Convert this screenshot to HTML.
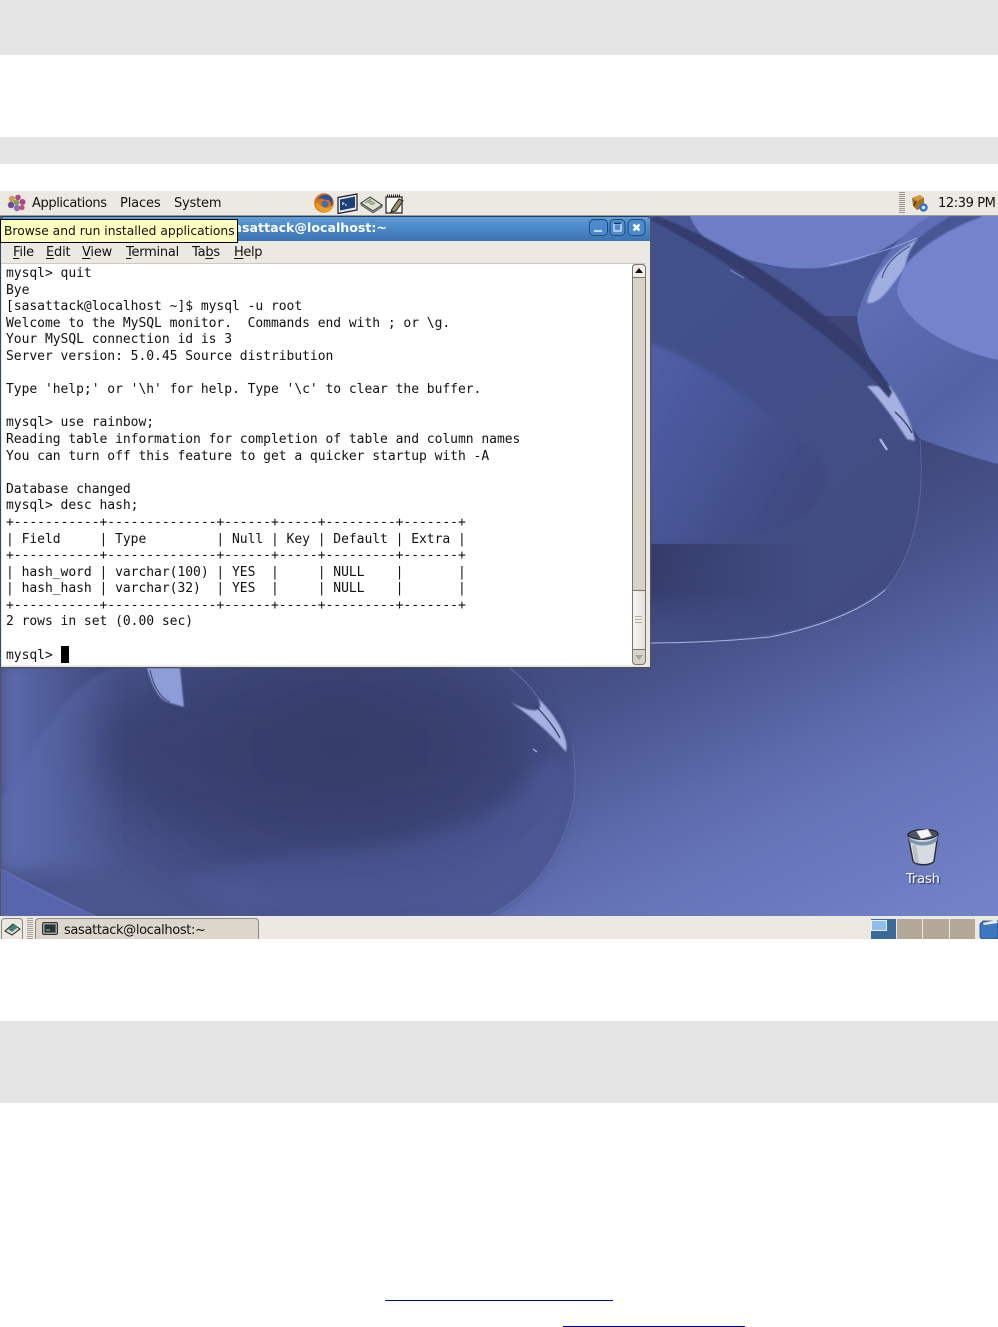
<!DOCTYPE html>
<html><head><meta charset="utf-8"><style>
html,body{margin:0;padding:0;background:#fff;width:998px;height:1327px;overflow:hidden}
body{position:relative;font-family:"DejaVu Sans","Liberation Sans",sans-serif;color:#111}
.a{position:absolute}
.band{position:absolute;left:0;width:998px;background:#e5e5e5}
.m{position:absolute;font-size:13px;line-height:16px;white-space:pre}
u{text-decoration-thickness:1px;text-underline-offset:2px}
#term{position:absolute;left:6px;top:266px;margin:0;font:13px/16.6px "DejaVu Sans Mono","Liberation Mono",monospace;letter-spacing:-.034px;color:#111;white-space:pre}
</style></head><body>
<div class="band" style="top:0;height:55px"></div>
<div class="band" style="top:137px;height:27px"></div>
<div class="band" style="top:1021px;height:82px"></div>

<svg class="a" style="left:0;top:216px" width="998" height="700" viewBox="0 216 998 700">
<defs>
<filter id="b2" x="-20%" y="-20%" width="140%" height="140%"><feGaussianBlur stdDeviation="2"/></filter>
<filter id="b6" x="-30%" y="-30%" width="160%" height="160%"><feGaussianBlur stdDeviation="8"/></filter>
<filter id="b20" x="-30%" y="-30%" width="160%" height="160%"><feGaussianBlur stdDeviation="22"/></filter>
<filter id="b1" x="-20%" y="-20%" width="140%" height="140%"><feGaussianBlur stdDeviation=".8"/></filter>
<linearGradient id="base" gradientUnits="userSpaceOnUse" x1="750" y1="500" x2="950" y2="915"><stop offset="0" stop-color="#3d4676"/><stop offset=".25" stop-color="#47528a"/><stop offset=".55" stop-color="#5e6cae"/><stop offset=".65" stop-color="#6472b6"/><stop offset="1" stop-color="#7282c8"/></linearGradient>
<radialGradient id="low" gradientUnits="userSpaceOnUse" cx="340" cy="750" r="300" gradientTransform="translate(0 220) scale(1 .7)"><stop offset="0" stop-color="#363d69"/><stop offset=".6" stop-color="#414a7e"/><stop offset="1" stop-color="#4b568f"/></radialGradient>
<linearGradient id="bowl" gradientUnits="userSpaceOnUse" x1="650" y1="300" x2="900" y2="620"><stop offset="0" stop-color="#42508c"/><stop offset="1" stop-color="#424c80"/></linearGradient>
<linearGradient id="inner" gradientUnits="userSpaceOnUse" x1="650" y1="380" x2="860" y2="500"><stop offset="0" stop-color="#4f5ea6"/><stop offset=".55" stop-color="#434f8c"/><stop offset="1" stop-color="#3c4577"/></linearGradient>
<linearGradient id="rb" gradientUnits="userSpaceOnUse" x1="860" y1="300" x2="998" y2="470"><stop offset="0" stop-color="#5e6fb6"/><stop offset=".6" stop-color="#5362a4"/><stop offset="1" stop-color="#6070b4"/></linearGradient>
<linearGradient id="lb" gradientUnits="userSpaceOnUse" x1="0" y1="0" x2="120" y2="0"><stop offset="0" stop-color="#5e6cb2"/><stop offset="1" stop-color="#5e6cb2" stop-opacity="0"/></linearGradient>
<linearGradient id="dkv" gradientUnits="userSpaceOnUse" x1="0" y1="544" x2="0" y2="640"><stop offset="0" stop-color="#343c68"/><stop offset=".5" stop-color="#363e6c"/><stop offset="1" stop-color="#3f4a80" stop-opacity="0"/></linearGradient>
<linearGradient id="mk" gradientUnits="userSpaceOnUse" x1="650" y1="0" x2="810" y2="0"><stop offset="0" stop-color="#fff"/><stop offset="1" stop-color="#000"/></linearGradient>
<mask id="fade" maskUnits="userSpaceOnUse" x="640" y="530" width="200" height="120"><rect x="640" y="530" width="200" height="120" fill="url(#mk)"/></mask>
</defs>
<rect x="0" y="216" width="998" height="700" fill="url(#base)"/>
<rect x="640" y="216" width="358" height="100" fill="#4a5796"/>
<path d="M690 216C700 245 740 262 790 268 850 272 890 250 930 216Z" fill="#6d7dc6"/>
<path d="M930 216C900 232 870 270 857 316 860 350 880 380 920 439 950 450 975 458 998 464V216Z" fill="url(#rb)"/>
<path d="M983 216C940 225 905 250 897 290 900 320 950 350 998 360V216Z" fill="#7383cc"/>
<path d="M950 216H983C945 230 915 250 900 272 895 262 900 250 917 240 925 232 938 224 950 216Z" fill="#4a5794" filter="url(#b1)"/>
<path d="M650 216C720 240 800 300 870 360 905 400 920 440 920 470 920 540 900 580 880 592 840 620 790 640 650 643Z" fill="url(#bowl)"/>
<path d="M650 343C700 360 770 410 817 456 835 480 820 510 780 528 740 540 700 544 650 544Z" fill="url(#inner)" filter="url(#b2)"/>
<rect x="640" y="544" width="180" height="96" fill="url(#dkv)" mask="url(#fade)"/>
<path d="M867 386C880 400 895 420 907 439L915 441C912 425 905 408 890 386Z" fill="#a5b1e2" filter="url(#b1)"/>
<path d="M657 216C700 232 770 270 817 310 850 335 875 360 892 392L889 398C880 388 875 382 867 373 840 345 790 310 772 296 730 265 690 240 650 220Z" fill="#343e6e" filter="url(#b1)"/>
<path d="M895 412C902 418 908 425 912 433" stroke="#343c62" stroke-width="1.3" fill="none"/>
<path d="M880 439L887 450" stroke="#a5b1e2" stroke-width="2.5"/>
<path d="M917 240C895 250 872 275 867 303 880 305 892 285 903 270 908 262 905 255 917 240Z" fill="#a0aee0" filter="url(#b1)"/>
<path d="M910 246C895 255 885 265 882 278" stroke="#3a4470" stroke-width="1" fill="none"/>
<path d="M830 265C860 258 890 250 917 238" stroke="#a9b6e8" stroke-width="1" fill="none" opacity=".7"/>
<path d="M920 440C925 500 915 555 885 590" stroke="#8a96cc" stroke-width="1" fill="none" opacity=".35"/>
<path d="M885 590C860 612 815 628 770 637 720 642 680 643 650 643" stroke="#b5bee8" stroke-width="1" fill="none" opacity=".9"/>
<path d="M730 270L744 278" stroke="#8391cc" stroke-width="1.2" opacity=".8"/>
<path d="M0 868C40 890 70 905 96 916H491C530 895 560 860 572 810 577 770 575 740 560 715 520 675 490 660 470 660H150C60 660 30 770 0 800Z" fill="url(#low)" filter="url(#b2)"/>
<path d="M574 760L536 760C530 780 510 800 491 810 430 840 370 850 312 853 270 860 220 865 180 880L230 916H491C530 895 560 860 572 810Z" fill="#515da0" opacity=".5" filter="url(#b6)"/>
<path d="M90 720C150 670 420 650 490 690 535 730 535 770 480 805 410 840 270 850 180 825 110 800 70 750 90 720Z" fill="#363e6b" opacity=".6" filter="url(#b20)"/>
<rect x="0" y="660" width="120" height="210" fill="url(#lb)" filter="url(#b6)"/>
<path d="M0 868L96 916H0Z" fill="#5765ac"/>
<path d="M0 868C40 892 70 905 96 916" stroke="#7480bf" stroke-width="1" fill="none" opacity=".45"/>
<path d="M491 915C530 895 562 860 574 800 576 780 575 765 573 745" stroke="#7a87c6" stroke-width="1" fill="none" opacity=".4"/>
<path d="M147 668C152 685 158 700 170 703L184 707 180 668Z" fill="#8e9cd8" filter="url(#b1)"/>
<path d="M150 670C153 685 160 698 170 702" stroke="#3e4772" stroke-width="1" fill="none"/>
<path d="M510 702C530 715 552 735 566 752 569 740 560 720 538 698 545 712 535 715 510 702Z" fill="#a5b1e2" filter="url(#b1)"/>
<path d="M535 705C545 716 553 725 560 738" stroke="#343c62" stroke-width="1.3" fill="none"/>
<path d="M498 660C515 670 530 685 541 702" stroke="#7480bf" stroke-width="1" fill="none" opacity=".7"/>
<path d="M533 749L537 752" stroke="#b0bbe6" stroke-width="1.2"/>
<rect x="0" y="216" width="1" height="700" fill="#555"/>
</svg>

<!-- top panel -->
<div class="a" style="left:0;top:191px;width:998px;height:25px;background:#ece9e3;border-bottom:1px solid #9c9a94;box-sizing:border-box"></div>
<svg class="a" style="left:7px;top:194px" width="20" height="18" viewBox="0 0 20 18">
<circle cx="5" cy="5" r="3.2" fill="#c9a04c"/><circle cx="11" cy="3.5" r="2.8" fill="#b5488a"/><circle cx="15.5" cy="8" r="3" fill="#a24a8e"/><circle cx="4" cy="11" r="3.2" fill="#6a4b9b"/><circle cx="10" cy="14" r="3.2" fill="#8a6cb8"/><circle cx="15" cy="13.5" r="2.6" fill="#c44f6a"/><circle cx="9.5" cy="8.5" r="2.8" fill="#7d9c55"/>
</svg>
<div class="m" style="left:32px;top:196px;letter-spacing:-.4px">Applications</div>
<div class="m" style="left:120px;top:196px;letter-spacing:-.15px">Places</div>
<div class="m" style="left:174px;top:196px;letter-spacing:-.2px">System</div>
<svg class="a" style="left:313px;top:192px" width="92" height="23" viewBox="0 0 92 23">
<circle cx="11" cy="11" r="9.8" fill="#d9741c"/><path d="M4 8C7 2 14 1 18 5 20 8 20 12 18 15 19 10 16 7 12 8 9 6 6 6 4 8Z" fill="#2f4f96"/><path d="M3 11C3 18 9 21 13 20 18 19 20 15 20 12 18 16 12 17 8 14 6 12 4 11 3 11Z" fill="#e8a020"/><circle cx="12" cy="12" r="3.5" fill="#4a6ab0"/>
<path d="M25 5.5L44 2V18L25 21.5Z" fill="#e8ecf2" stroke="#1a1a22" stroke-width="1.2"/><path d="M27 7.5L42 4.5V15.5L27 18.5Z" fill="#1f3f78"/><path d="M29 10.5l2 1-2 1M32 13h2" stroke="#fff" stroke-width=".9" fill="none"/>
<path d="M48 11L57 5 69 13 60 19Z" fill="#dfe4d6" stroke="#333" stroke-width="1"/><path d="M48 11V13L60 21 69 15V13L60 19Z" fill="#9ca38f" stroke="#333" stroke-width=".7"/><path d="M54 9l6 4M56 8l6 4M58 7l-6 4" stroke="#88a080" stroke-width="1.4" fill="none"/>
<path d="M73 5H89V21H73Z" fill="#fafaf4" stroke="#222" stroke-width="1.2"/><path d="M74 3.5H88" stroke="#222" stroke-width="2" stroke-dasharray="1 1"/><path d="M79 17L86 7 90 9 83 19 78 20Z" fill="#9a8f60" stroke="#222" stroke-width="1"/>
</svg>
<div class="a" style="left:899px;top:192px;width:6px;height:22px;background:repeating-linear-gradient(#9a988f 0 1px,#ece9e3 1px 2px)"></div>
<svg class="a" style="left:911px;top:194px" width="18" height="19" viewBox="0 0 18 19"><path d="M1 4L9 1 13 4 13 13 6 16 2 12Z" fill="#a8721c"/><path d="M1 4L9 1 13 4 6 7Z" fill="#d49a3c"/><path d="M5 7L3 12" stroke="#5c3c10" stroke-width="1.5"/><circle cx="12.5" cy="13.5" r="4.2" fill="#2f74c8"/><circle cx="12.5" cy="13.5" r="1.8" fill="#d8e8f8"/></svg>
<div class="m" style="left:938px;top:196px;letter-spacing:-.4px">12:39 PM</div>

<!-- terminal window -->
<div class="a" style="left:0;top:216px;width:651px;height:452px;background:#ece9e3;box-sizing:border-box;border:1px solid #2a4a70;border-top:1px solid #1e3c64;border-radius:5px 5px 0 0;border-bottom-color:#4c4c50;border-right-color:#555"></div>
<div class="a" style="left:1px;top:217px;width:649px;height:24px;background:linear-gradient(#639dd6,#4b89c8 45%,#3a75b6);border-radius:4px 4px 0 0"></div>
<div class="a" style="left:180px;top:220px;width:207px;text-align:right;color:#fff;font-weight:bold;font-size:12.6px;line-height:15px;white-space:nowrap">sasattack@localhost:~</div>
<svg class="a" style="left:588px;top:218px" width="60" height="20" viewBox="0 0 60 20">
<g fill="#4d8acb" stroke="#1f4a7e"><rect x="1.5" y="1.5" width="18" height="16" rx="4"/><rect x="22" y="1.5" width="15" height="16" rx="4"/><rect x="40" y="1.5" width="17" height="16" rx="4"/></g>
<path d="M6 13H14" stroke="#e8f0f8" stroke-width="1.6"/><path d="M26 6H33V13H26Z" stroke="#e8f0f8" stroke-width="1.2" fill="none"/><path d="M26 5.5H33" stroke="#12305a" stroke-width="1.4"/><path d="M45.5 6.5L51.5 12.5M51.5 6.5L45.5 12.5" stroke="#fff" stroke-width="2.4"/>
</svg>
<div class="a" style="left:1px;top:241px;width:645px;height:23px;background:#ece9e3;border-bottom:1px solid #cfc9bd;box-sizing:border-box"></div>
<div class="m" style="left:13px;top:245px;letter-spacing:-.2px"><u>F</u>ile</div>
<div class="m" style="left:46px;top:245px;letter-spacing:-.2px"><u>E</u>dit</div>
<div class="m" style="left:82px;top:245px;letter-spacing:-.2px"><u>V</u>iew</div>
<div class="m" style="left:126px;top:245px;letter-spacing:-.25px"><u>T</u>erminal</div>
<div class="m" style="left:192px;top:245px;letter-spacing:-.2px">Ta<u>b</u>s</div>
<div class="m" style="left:234px;top:245px;letter-spacing:-.4px"><u>H</u>elp</div>
<div class="a" style="left:2px;top:264px;width:630px;height:401px;background:#fff"></div>
<pre id="term">mysql&gt; quit
Bye
[sasattack@localhost ~]$ mysql -u root
Welcome to the MySQL monitor.  Commands end with ; or \g.
Your MySQL connection id is 3
Server version: 5.0.45 Source distribution

Type 'help;' or '\h' for help. Type '\c' to clear the buffer.

mysql&gt; use rainbow;
Reading table information for completion of table and column names
You can turn off this feature to get a quicker startup with -A

Database changed
mysql&gt; desc hash;
+-----------+--------------+------+-----+---------+-------+
| Field     | Type         | Null | Key | Default | Extra |
+-----------+--------------+------+-----+---------+-------+
| hash_word | varchar(100) | YES  |     | NULL    |       |
| hash_hash | varchar(32)  | YES  |     | NULL    |       |
+-----------+--------------+------+-----+---------+-------+
2 rows in set (0.00 sec)

mysql&gt; </pre>
<div class="a" style="left:61px;top:646px;width:8px;height:17px;background:#000"></div>
<!-- scrollbar -->
<div class="a" style="left:632px;top:264px;width:14px;height:401px;box-sizing:border-box;background:#d8d2c8;border:1px solid #7c756a;border-radius:4px"></div>
<div class="a" style="left:632px;top:264px;width:14px;height:14px;box-sizing:border-box;background:#f2efe9;border:1px solid #7c756a;border-radius:4px 4px 0 0"></div>
<svg class="a" style="left:635px;top:268px" width="8" height="5"><path d="M0 5L4 0 8 5Z" fill="#111"/></svg>
<div class="a" style="left:632px;top:590px;width:14px;height:60px;box-sizing:border-box;background:linear-gradient(90deg,#f6f4f0,#e6e2da);border:1px solid #7c756a"></div>
<div class="a" style="left:635px;top:616px;width:7px;height:7px;background:repeating-linear-gradient(#b5aea2 0 1px,#f2efe9 1px 3px)"></div>
<svg class="a" style="left:635px;top:655px" width="8" height="5"><path d="M0 0L4 5 8 0Z" fill="#aaa49a"/></svg>
<!-- tooltip -->
<div class="a" style="left:0;top:219px;width:238px;height:24px;box-sizing:border-box;background:#ffffbf;border:1px solid #000;font-size:12.3px;line-height:22px;padding-left:3px;color:#111;white-space:nowrap">Browse and run installed applications</div>

<!-- trash -->
<svg class="a" style="left:904px;top:827px" width="38" height="40" viewBox="0 0 38 40">
<path d="M4 8C4 2 33 0 34 7L30 34C28 39 11 39 9 34Z" fill="#d7dadf" stroke="#2a2a30" stroke-width="1.4"/>
<path d="M4 8C8 14 30 14 34 7 33 1 5 1 4 8Z" fill="#4c5566" stroke="#2a2a30" stroke-width="1.2"/>
<path d="M12 4L24 2 28 9 17 12Z" fill="#f5f5f5" stroke="#777" stroke-width=".6"/>
<path d="M4 9C9 17 29 17 34 8L33 14C26 20 12 20 5 14Z" fill="#7a94b4"/>
<path d="M10 18L13 36" stroke="#aab0b8" stroke-width="4" opacity=".6"/>
</svg>
<div class="a" style="left:906px;top:872px;color:#fff;font-size:13px;line-height:16px;letter-spacing:-.1px;text-shadow:1px 1px 1px #222c60">Trash</div>

<!-- bottom panel -->
<div class="a" style="left:0;top:916px;width:998px;height:23px;background:#ece9e3"></div>
<div class="a" style="left:1px;top:918px;width:22px;height:21px;box-sizing:border-box;border:1px solid #8e897e;border-bottom:0;border-radius:4px 4px 0 0;background:#ece9e3"></div>
<svg class="a" style="left:4px;top:921px" width="17" height="16" viewBox="0 0 17 16"><path d="M1 10L9 3 16 8 8 14Z" fill="#dcd8c8" stroke="#222"/><path d="M4 8L10 3 14 6 8 11Z" fill="#3f8078"/></svg>
<div class="a" style="left:27px;top:918px;width:6px;height:21px;background:repeating-linear-gradient(#a5a298 0 1px,#ece9e3 1px 2px)"></div>
<div class="a" style="left:35px;top:918px;width:224px;height:21px;box-sizing:border-box;border:1px solid #8e897e;border-bottom:0;border-radius:4px 4px 0 0;background:#dcd6cc"></div>
<svg class="a" style="left:42px;top:922px" width="16" height="14" viewBox="0 0 16 14"><rect x=".5" y=".5" width="15" height="12" rx="1.5" fill="#9aa0a0" stroke="#333"/><rect x="2.5" y="2.5" width="11" height="8" fill="#2c3434"/><path d="M4 8h4" stroke="#9c9"/></svg>
<div class="m" style="left:64px;top:923px;letter-spacing:-.35px">sasattack@localhost:~</div>
<div class="a" style="left:871px;top:919px;width:25px;height:20px;background:#3a6a9a"></div>
<div class="a" style="left:871px;top:920px;width:16px;height:11px;box-sizing:border-box;background:#8ebeea;border:1px solid #e8eef4"></div>
<div class="a" style="left:897px;top:919px;width:25px;height:20px;background:#b2a895"></div>
<div class="a" style="left:923px;top:919px;width:26px;height:20px;background:#b2a895"></div>
<div class="a" style="left:950px;top:919px;width:25px;height:20px;background:#b2a895"></div>
<svg class="a" style="left:979px;top:919px" width="19" height="20" viewBox="0 0 19 20"><path d="M1 5L4 2H19V20H3L1 18Z" fill="#3c78c0" stroke="#1f4578" stroke-width=".8"/><path d="M4 4L17 1 19 4 5 6Z" fill="#e8eef4"/></svg>

<!-- link underlines -->
<div class="a" style="left:385px;top:1300px;width:228px;height:1px;background:#00008b"></div>
<div class="a" style="left:563px;top:1326px;width:182px;height:1px;background:#00008b"></div>
</body></html>
